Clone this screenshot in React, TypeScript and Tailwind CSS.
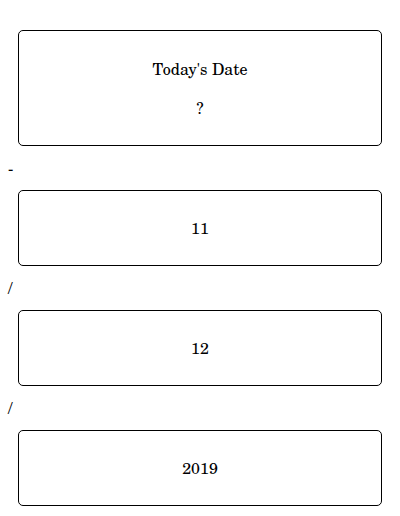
function Box({ children, className = "" }: { children: React.ReactNode; className?: string }) {
  return (
    <div className={`mx-[10px] rounded-[5px] border border-black flex flex-col items-center ${className}`}>
      {children}
    </div>
  );
}

function Sep({ ch }: { ch: string }) {
  return <div className="h-[24px] leading-[24px]">{ch}</div>;
}

export default function App() {
  return (
    <div className="px-2 pt-[20px] font-['TeX_Gyre_Schola','Liberation_Serif',serif] text-[16px] text-black leading-[20px]">
      <div className="my-[10px]">
        <Box className="pt-[28px] pb-[27px] gap-[19px]">
          <div>Today's Date</div>
          <div>?</div>
        </Box>
      </div>
      <Sep ch="-" />
      <div className="my-[10px]">
        <Box className="py-[27px]">
          <div>11</div>
        </Box>
      </div>
      <Sep ch="/" />
      <div className="my-[10px]">
        <Box className="py-[27px]">
          <div>12</div>
        </Box>
      </div>
      <Sep ch="/" />
      <div className="my-[10px]">
        <Box className="py-[27px]">
          <div>2019</div>
        </Box>
      </div>
    </div>
  );
}
